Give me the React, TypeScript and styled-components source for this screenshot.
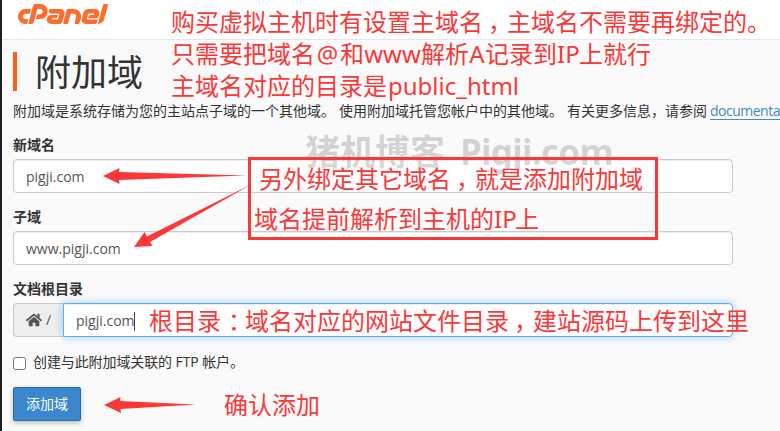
import React from "react";
import styled, { createGlobalStyle } from "styled-components";
import { FaHome } from "react-icons/fa";
import { SiCpanel } from "react-icons/si";

const RED = "#fb3838";

const GlobalStyle = createGlobalStyle`
  *, *::before, *::after { box-sizing: border-box; }
  body {
    margin: 0;
    overflow: hidden;
    background: #fafafa;
    color: #333;
    font: 14px/20px "Open Sans", "Noto Sans CJK SC", sans-serif;
  }
`;

const Page = styled.div`
  position: relative;
  display: flex;
  width: 780px;
  height: 431px;
  overflow: hidden;
  background: #fafafa;
`;

const Sidebar = styled.div`
  flex: 0 0 2px;
  background: #1f1f20;
`;

const Content = styled.div`
  flex: 1;
  min-width: 0;
`;

const Header = styled.header`
  height: 40px;
  padding-left: 16px;
  background: #fff;
  border-bottom: 1px solid #e6e6f0;
  color: #ff6c2c;
  overflow: hidden;
`;

const Logo = styled(SiCpanel)`
  display: block;
  width: 90px;
  height: 90px;
  margin-top: -31px;
`;

const Main = styled.main`
  padding: 12px 0 0 11px;
`;

const Title = styled.h1`
  margin: 0;
  height: 39px;
  padding-left: 18px;
  border-left: 4px solid #ff5e1a;
  font-size: 36px;
  line-height: 41px;
  font-weight: 400;
`;

const Description = styled.p`
  display: flex;
  gap: 4px;
  margin: 10px 0 0;
  height: 20px;
  white-space: nowrap;
`;

const DocLink = styled.a`
  color: #428bca;
  text-decoration: underline;
  text-underline-offset: 3px;
  margin-left: -1px;
  letter-spacing: -0.5px;
`;

const Field = styled.div<{ $top: number }>`
  width: 720px;
  margin-top: ${(p) => p.$top}px;
`;

const Label = styled.label`
  display: block;
  height: 24px;
  font-weight: 700;
`;

const InputGroup = styled.div`
  display: flex;
  height: 34px;
`;

const Addon = styled.span`
  display: flex;
  align-items: center;
  gap: 4px;
  flex: 0 0 50px;
  padding-left: 12px;
  border: 1px solid #ccc;
  border-right: 0;
  border-radius: 4px 0 0 4px;
  background: #eee;
  color: #555;
`;

const TextBox = styled.div<{ $focused?: boolean }>`
  display: flex;
  align-items: center;
  flex: 1;
  height: 34px;
  padding: 2px 12px 0;
  background: #fff;
  color: #555;
  border: 1px solid ${(p) => (p.$focused ? "#66afe9" : "#ccc")};
  border-radius: ${(p) => (p.$focused ? "0 4px 4px 0" : "4px")};
  box-shadow: ${(p) =>
    p.$focused
      ? "inset 0 1px 1px rgba(0,0,0,.075), 0 0 8px rgba(102,175,233,.6)"
      : "inset 0 1px 1px rgba(0,0,0,.075)"};
`;

const Caret = styled.span`
  width: 1px;
  height: 19px;
  margin-left: -1px;
  background: #444;
`;

const CheckRow = styled.label`
  display: flex;
  align-items: center;
  gap: 7px;
  height: 20px;
  margin-top: 15px;
`;

const CheckText = styled.span`
  letter-spacing: -0.1px;
`;

const Checkbox = styled.input`
  width: 13px;
  height: 13px;
  margin: 2px 0 0;
`;

const SubmitButton = styled.button`
  display: block;
  width: 68px;
  height: 34px;
  margin-top: 15px;
  padding: 0 0 1px;
  border: 1px solid #2b6ca3;
  border-radius: 2px;
  background: #3a87cd;
  color: #fff;
  font: inherit;
  box-shadow: 0 2px 5px rgba(0, 0, 0, 0.26);
`;

const Note = styled.div<{ $x: number; $y: number; $line?: number }>`
  position: absolute;
  left: ${(p) => p.$x}px;
  top: ${(p) => p.$y}px;
  color: ${RED};
  font: 24px/${(p) => p.$line ?? 32}px "Noto Sans", "Noto Sans CJK SC", sans-serif;
  white-space: nowrap;
`;

const Shift = styled.div<{ $x: number }>`
  padding-left: ${(p) => p.$x}px;
`;

const Latin = styled.span<{ $width: number }>`
  display: inline-block;
  width: ${(p) => p.$width}px;
  text-align: center;
`;

const Mark = styled.span<{ $indent: number }>`
  display: inline-block;
  width: 24px;
  text-indent: ${(p) => p.$indent}px;
`;

const Comma = () => <Mark $indent={5}>，</Mark>;
const Colon = () => <Mark $indent={7}>：</Mark>;

const Callout = styled.div`
  position: absolute;
  left: 248px;
  top: 157px;
  width: 410px;
  height: 83px;
  border: 3px solid ${RED};
`;

const Watermark = styled.div`
  position: absolute;
  left: 305px;
  top: 130px;
  display: flex;
  gap: 15px;
  color: rgba(0, 0, 0, 0.16);
  font: 700 35px/44px "Noto Sans", "Noto Sans CJK SC", sans-serif;
  white-space: nowrap;
`;

const WatermarkSite = styled.span`
  letter-spacing: -0.7px;
`;

const Arrows = styled.svg`
  position: absolute;
  inset: 0;
  fill: ${RED};
`;

export default function App() {
  return (
    <Page lang="zh-CN">
      <GlobalStyle />
      <Sidebar />
      <Content>
        <Header>
          <Logo />
        </Header>
        <Main>
          <Title>附加域</Title>
          <Description>
            <span>附加域是系统存储为您的主站点子域的一个其他域。</span>
            <span>使用附加域托管您帐户中的其他域。</span>
            <span>有关更多信息，请参阅</span>
            <DocLink>documentation</DocLink>
          </Description>
          <Field $top={14}>
            <Label>新域名</Label>
            <TextBox>pigji.com</TextBox>
          </Field>
          <Field $top={14}>
            <Label>子域</Label>
            <TextBox>www.pigji.com</TextBox>
          </Field>
          <Field $top={14}>
            <Label>文档根目录</Label>
            <InputGroup>
              <Addon>
                <FaHome size={16} />
                <span>/</span>
              </Addon>
              <TextBox $focused>
                pigji.com
                <Caret />
              </TextBox>
            </InputGroup>
          </Field>
          <CheckRow>
            <Checkbox type="checkbox" />
            <CheckText>创建与此附加域关联的 FTP 帐户。</CheckText>
          </CheckRow>
          <SubmitButton>添加域</SubmitButton>
        </Main>
      </Content>

      <Watermark>
        <span>猪机博客</span>
        <WatermarkSite>Pigji.com</WatermarkSite>
      </Watermark>
      <Callout />
      <Arrows width="780" height="431" viewBox="0 0 780 431">
        <path d="M103 176 119.500 168 119 172 247 175.500 119 180 119.500 184Z" />
        <path d="M134 247 144.500 232 147 236.500 252 184 150 242 152.500 246Z" />
        <path d="M104 405 120.500 397 120 401 196 404.500 120.500 409 121 413Z" />
      </Arrows>
      <Note $x={171} $y={6}>
        <div>
          购买虚拟主机时有设置主域名
          <Comma />
          主域名不需要再绑定的。
        </div>
        <div>
          只需要把域名<Latin $width={25}>@</Latin>和<Latin $width={57}>www</Latin>解析
          <Latin $width={16}>A</Latin>记录到<Latin $width={22}>IP</Latin>上就行
        </div>
        <div>
          主域名对应的目录是<Latin $width={133}>public_html</Latin>
        </div>
      </Note>
      <Note $x={254} $y={159} $line={40}>
        <Shift $x={5}>
          另外绑定其它域名
          <Comma />
          就是添加附加域
        </Shift>
        <div>
          域名提前解析到主机的<Latin $width={21}>IP</Latin>上
        </div>
      </Note>
      <Note $x={149} $y={305}>
        根目录
        <Colon />
        域名对应的网站文件目录
        <Comma />
        建站源码上传到这里
      </Note>
      <Note $x={224} $y={389}>确认添加</Note>
    </Page>
  );
}
